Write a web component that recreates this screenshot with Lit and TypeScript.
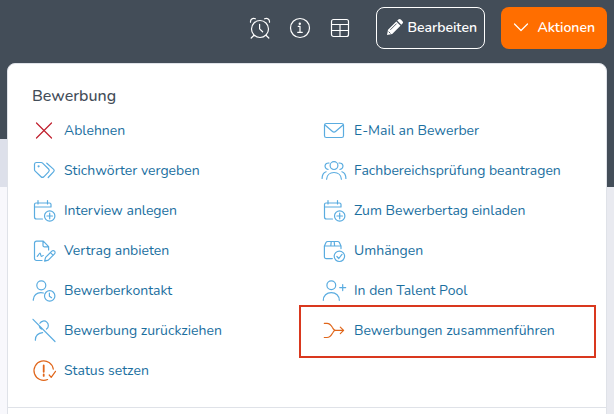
import { LitElement, html, svg, css, type SVGTemplateResult } from "lit";
import { customElement, property } from "lit/decorators.js";
import { classMap } from "lit/directives/class-map.js";

const icons: Record<string, SVGTemplateResult> = {
  cross: svg`<path d="M4.5 5 19.5 20M19.5 5 4.5 20"/>`,
  tags: svg`
    <path d="M2.5 6.2A2 2 0 0 1 4.5 4.5H9.2a2 2 0 0 1 1.4.6L16.6 11a2 2 0 0 1 0 2.8L11.8 18.8a2 2 0 0 1-2.8 0L3.2 13.1a2 2 0 0 1-.7-1.4z"/>
    <path d="M14.8 5.2 21.7 11.4a1.6 1.6 0 0 1 0 2.2L16.2 19.5"/><circle cx="6.6" cy="8.3" r=".5"/>`,
  calendar: svg`
    <path d="M2.5 9V6.5a1.5 1.5 0 0 1 1.5-1.5H17.5a1.5 1.5 0 0 1 1.5 1.5V9zM2.5 9v10a2 2 0 0 0 2 2H10.5M6 2.5V6M15.5 2.5V6"/>
    <circle cx="17.7" cy="18" r="5.2"/><path d="M17.7 15.2v5.6M14.9 18h5.6"/>`,
  contract: svg`
    <path d="M10 22.5H4.5a2 2 0 0 1-2-2V5.2a2 2 0 0 1 2-2H11.3L16.6 8.6V12M11 3.4V7.4a1.4 1.4 0 0 0 1.4 1.4H16.4"/>
    <path d="M5.3 18.3C6.4 17.4 7.3 15 8 15s.6 3.4 1.5 3.4 1-.9 1.8-.9"/>
    <path d="m12.6 23.2 1-3.8 6.2-6.2a1.7 1.7 0 0 1 2.7 2.7l-6.2 6.2zM18.5 14.6l2.7 2.7"/>`,
  contact: svg`
    <circle cx="9.3" cy="7.3" r="4.5"/><path d="M1.3 22.2V21.6C1.5 17.3 4.8 14.6 8.8 14.6c1 0 1.8.1 2.6.4"/>
    <circle cx="17.7" cy="17.9" r="5.2"/><path d="M17.4 15v3.2l2.2 1.5"/>`,
  withdraw: svg`
    <path d="M1 1.3 23 23.5M7.9 5.3a4.5 4.5 0 1 1 6.6 5.8M9.4 11.1A4.5 4.5 0 0 1 7.4 8.6M3.4 22.2v-.6c.2-3.8 3.1-6.6 7.2-7"/>`,
  status: svg`
    <path d="M21.3 11.2A9.7 9.7 0 1 0 15.6 21.5M17.2 17l2 2.3 4.3-6"/>
    <path stroke-width="1.8" d="M11.7 7.5v6.3M11.7 16.4v1.5"/>`,
  mail: svg`<rect x="2.5" y="5.5" width="19" height="14" rx="1.8"/><path d="M3 7 10.2 13.3a2.7 2.7 0 0 0 3.6 0L21 7"/>`,
  people: svg`
    <circle cx="12" cy="7.6" r="3.9"/><path d="M4.6 21.2c.2-4 3.2-6.7 7.4-6.7s7.2 2.7 7.4 6.7"/>
    <path d="M6 11.4A3.2 3.2 0 1 1 7 5.1M18 11.4a3.2 3.2 0 1 0-1-6.3M.1 20.5c0-3.2 1.5-5.8 4-6.7M23.9 20.5c0-3.2-1.5-5.8-4-6.7"/>`,
  box: svg`
    <path d="M10.3 20.6H4.2a1.8 1.8 0 0 1-1.8-1.8V8L4 4.6A2 2 0 0 1 5.8 3.5h9.8a2 2 0 0 1 1.8 1.1L19 8v2.6M2.4 8H19M9.2 3.7 8.8 8M12.2 3.7l.4 4.3"/>
    <circle cx="17.4" cy="18.3" r="5.2"/><path d="m14.9 18.5 1.9 2 3.2-4.2"/>`,
  pool: svg`
    <circle cx="9.3" cy="7.3" r="4.4"/><path d="M1.3 22.3c0-4.6 3.3-7.7 8-7.7s8 3.1 8 7.7M20.7 6.6v6M17.7 9.6h6"/>`,
  merge: svg`<path d="M2.3 5.3H5c3 0 4.200 2 5.300 4l.8 1.300c.6 1.100 1.300 1.800 2.500 1.800M2.300 19.500H5c3 0 4.200-2 5.300-4l.8-1.300c.6-1.100 1.300-1.800 2.500-1.800h7.900M18.300 9.100l3.300 3.300-3.300 3.300"/>`,
  alarm: svg`
    <circle cx="12" cy="13" r="8.5"/><path d="M11.6 8.300v4.600l3 2.900M6 19.300 3.200 22M18 19.300l2.800 2.700"/>
    <path d="M2.500 6.200C2.300 3.200 4.500 1.800 7.400 2.800M21.500 6.200C21.700 3.200 19.500 1.800 16.600 2.800"/>`,
  info: svg`
    <circle cx="12" cy="12" r="9.5"/><path d="M10.200 10.300H12V16.300M9.700 16.300h4.600"/><circle cx="11.800" cy="7.700" r=".6"/>`,
  table: svg`<rect x="3.5" y="3.5" width="17" height="17" rx="2"/><path d="M3.500 8.500h17M3.500 14.500h17M12 8.500v12"/>`,
  pencil: svg`
    <path fill="currentColor" stroke="none" d="M0 16 1 10.800 9.300 2.500l4.200 4.200L5.200 15zM10.200 1.600 11.400.5a1.700 1.700 0 0 1 2.400 0l1.700 1.700a1.700 1.700 0 0 1 0 2.400l-1.200 1.200z"/>
    <path stroke="#434d58" stroke-width=".9" d="M3.600 10.600 9.300 4.900M1.900 12.900l1.300 1.300"/>`,
  chevron: svg`<path d="m1.500 5 6.500 6.500L14.500 5"/>`,
};

@customElement("ui-icon")
export class UiIcon extends LitElement {
  @property() name = "";
  @property({ type: Number }) size = 24;

  static styles = css`
    :host { display: block; flex: none; }
    svg { display: block; overflow: visible; fill: none; stroke: currentColor;
      stroke-width: 1.2; stroke-linecap: round; stroke-linejoin: round; }
  `;

  render() {
    return html`<svg width=${this.size} height=${this.size} viewBox="0 0 ${this.size} ${this.size}" aria-hidden="true">
      ${icons[this.name]}
    </svg>`;
  }
}

interface Action {
  label: string;
  icon: string;
  tone?: "danger" | "warn";
  marked?: boolean;
}

const columns: Action[][] = [
  [
    { label: "Ablehnen", icon: "cross", tone: "danger" },
    { label: "Stichwörter vergeben", icon: "tags" },
    { label: "Interview anlegen", icon: "calendar" },
    { label: "Vertrag anbieten", icon: "contract" },
    { label: "Bewerberkontakt", icon: "contact" },
    { label: "Bewerbung zurückziehen", icon: "withdraw" },
    { label: "Status setzen", icon: "status", tone: "warn" },
  ],
  [
    { label: "E-Mail an Bewerber", icon: "mail" },
    { label: "Fachbereichsprüfung beantragen", icon: "people" },
    { label: "Zum Bewerbertag einladen", icon: "calendar" },
    { label: "Umhängen", icon: "box" },
    { label: "In den Talent Pool", icon: "pool" },
    { label: "Bewerbungen zusammenführen", icon: "merge", tone: "warn", marked: true },
  ],
];

@customElement("app-root")
export class AppRoot extends LitElement {
  static styles = css`
    :host { display: block; font-family: Nunito, "Open Sans", "Noto Sans", sans-serif; color: #434d58; }
    * { box-sizing: border-box; }
    .page { position: relative; min-height: 100vh; overflow: hidden; background: #f8f8fc;
      display: flex; flex-direction: column; }
    .bar { display: flex; align-items: center; justify-content: flex-end; gap: 16px;
      padding: 7px 7px 90px; background: #434d58; }
    .tools { display: flex; gap: 16px; margin-right: 8px; }
    button { font: inherit; color: #fff; cursor: pointer; }
    .tool { padding: 0; border: 0; background: none; }
    .btn { display: flex; align-items: center; justify-content: flex-end; height: 42px; border-radius: 8px;
      font-size: 14px; font-weight: 600; white-space: nowrap; }
    .edit { width: 109px; gap: 4px; padding: 0 7px 2px 0; border: 1px solid #fff; background: none; }
    .actions { width: 106px; gap: 8px; padding: 0 12px 2px 0; border: 0; background: #ff6e00; }
    .band { display: flex; height: 48px; background: #434d58; }
    .tab { width: 50%; background: #dde0ea; }
    .body { flex: 1; display: flex; justify-content: flex-end; }
    .side { width: 50%; background: #e9eaf0; }
    .menu { position: absolute; inset: 63px 7px auto; background: #fff; border: 1px solid #dfe2e8;
      border-radius: 8px; }
    .group { padding: 20px 24px 17px; border-bottom: 1px solid #dfe2e8; }
    .more { height: 40px; }
    h2 { margin: 0 0 2px; font-size: 16px; line-height: 24px; font-weight: 500; }
    .grid { display: grid; grid-template-columns: 1fr 1fr; column-gap: 30px; }
    ul { list-style: none; margin: 0; padding: 0; min-width: 0; }
    li { position: relative; }
    a { display: flex; align-items: center; gap: 8px; height: 40px; color: #1b6f9f;
      font-size: 14px; text-decoration: none; white-space: nowrap; }
    ui-icon.line { color: #5aace0; }
    ui-icon.danger { color: #c01f2e; }
    ui-icon.warn { color: #e0661a; }
    .marked::after { content: ""; position: absolute; inset: -5px -14px -8px -23px;
      border: 2px solid #d9381e; pointer-events: none; }
  `;

  private item(action: Action) {
    const tone = { line: !action.tone, danger: action.tone === "danger", warn: action.tone === "warn" };
    return html`<li class=${classMap({ marked: !!action.marked })}>
      <a href="#"><ui-icon class=${classMap(tone)} name=${action.icon}></ui-icon>${action.label}</a>
    </li>`;
  }

  render() {
    return html`
      <div class="page">
        <header class="bar">
          <div class="tools">
            <button class="tool" aria-label="Wiedervorlage"><ui-icon name="alarm"></ui-icon></button>
            <button class="tool" aria-label="Information"><ui-icon name="info"></ui-icon></button>
            <button class="tool" aria-label="Tabelle"><ui-icon name="table"></ui-icon></button>
          </div>
          <button class="btn edit"><ui-icon name="pencil" size="16"></ui-icon>Bearbeiten</button>
          <button class="btn actions" aria-expanded="true"><ui-icon name="chevron" size="16"></ui-icon>Aktionen</button>
        </header>
        <div class="band"><div class="tab"></div></div>
        <div class="body"><div class="side"></div></div>
        <nav class="menu" aria-labelledby="group-title">
          <section class="group">
            <h2 id="group-title">Bewerbung</h2>
            <div class="grid">${columns.map((list) => html`<ul>${list.map((a) => this.item(a))}</ul>`)}</div>
          </section>
          <div class="more"></div>
        </nav>
      </div>
    `;
  }
}
